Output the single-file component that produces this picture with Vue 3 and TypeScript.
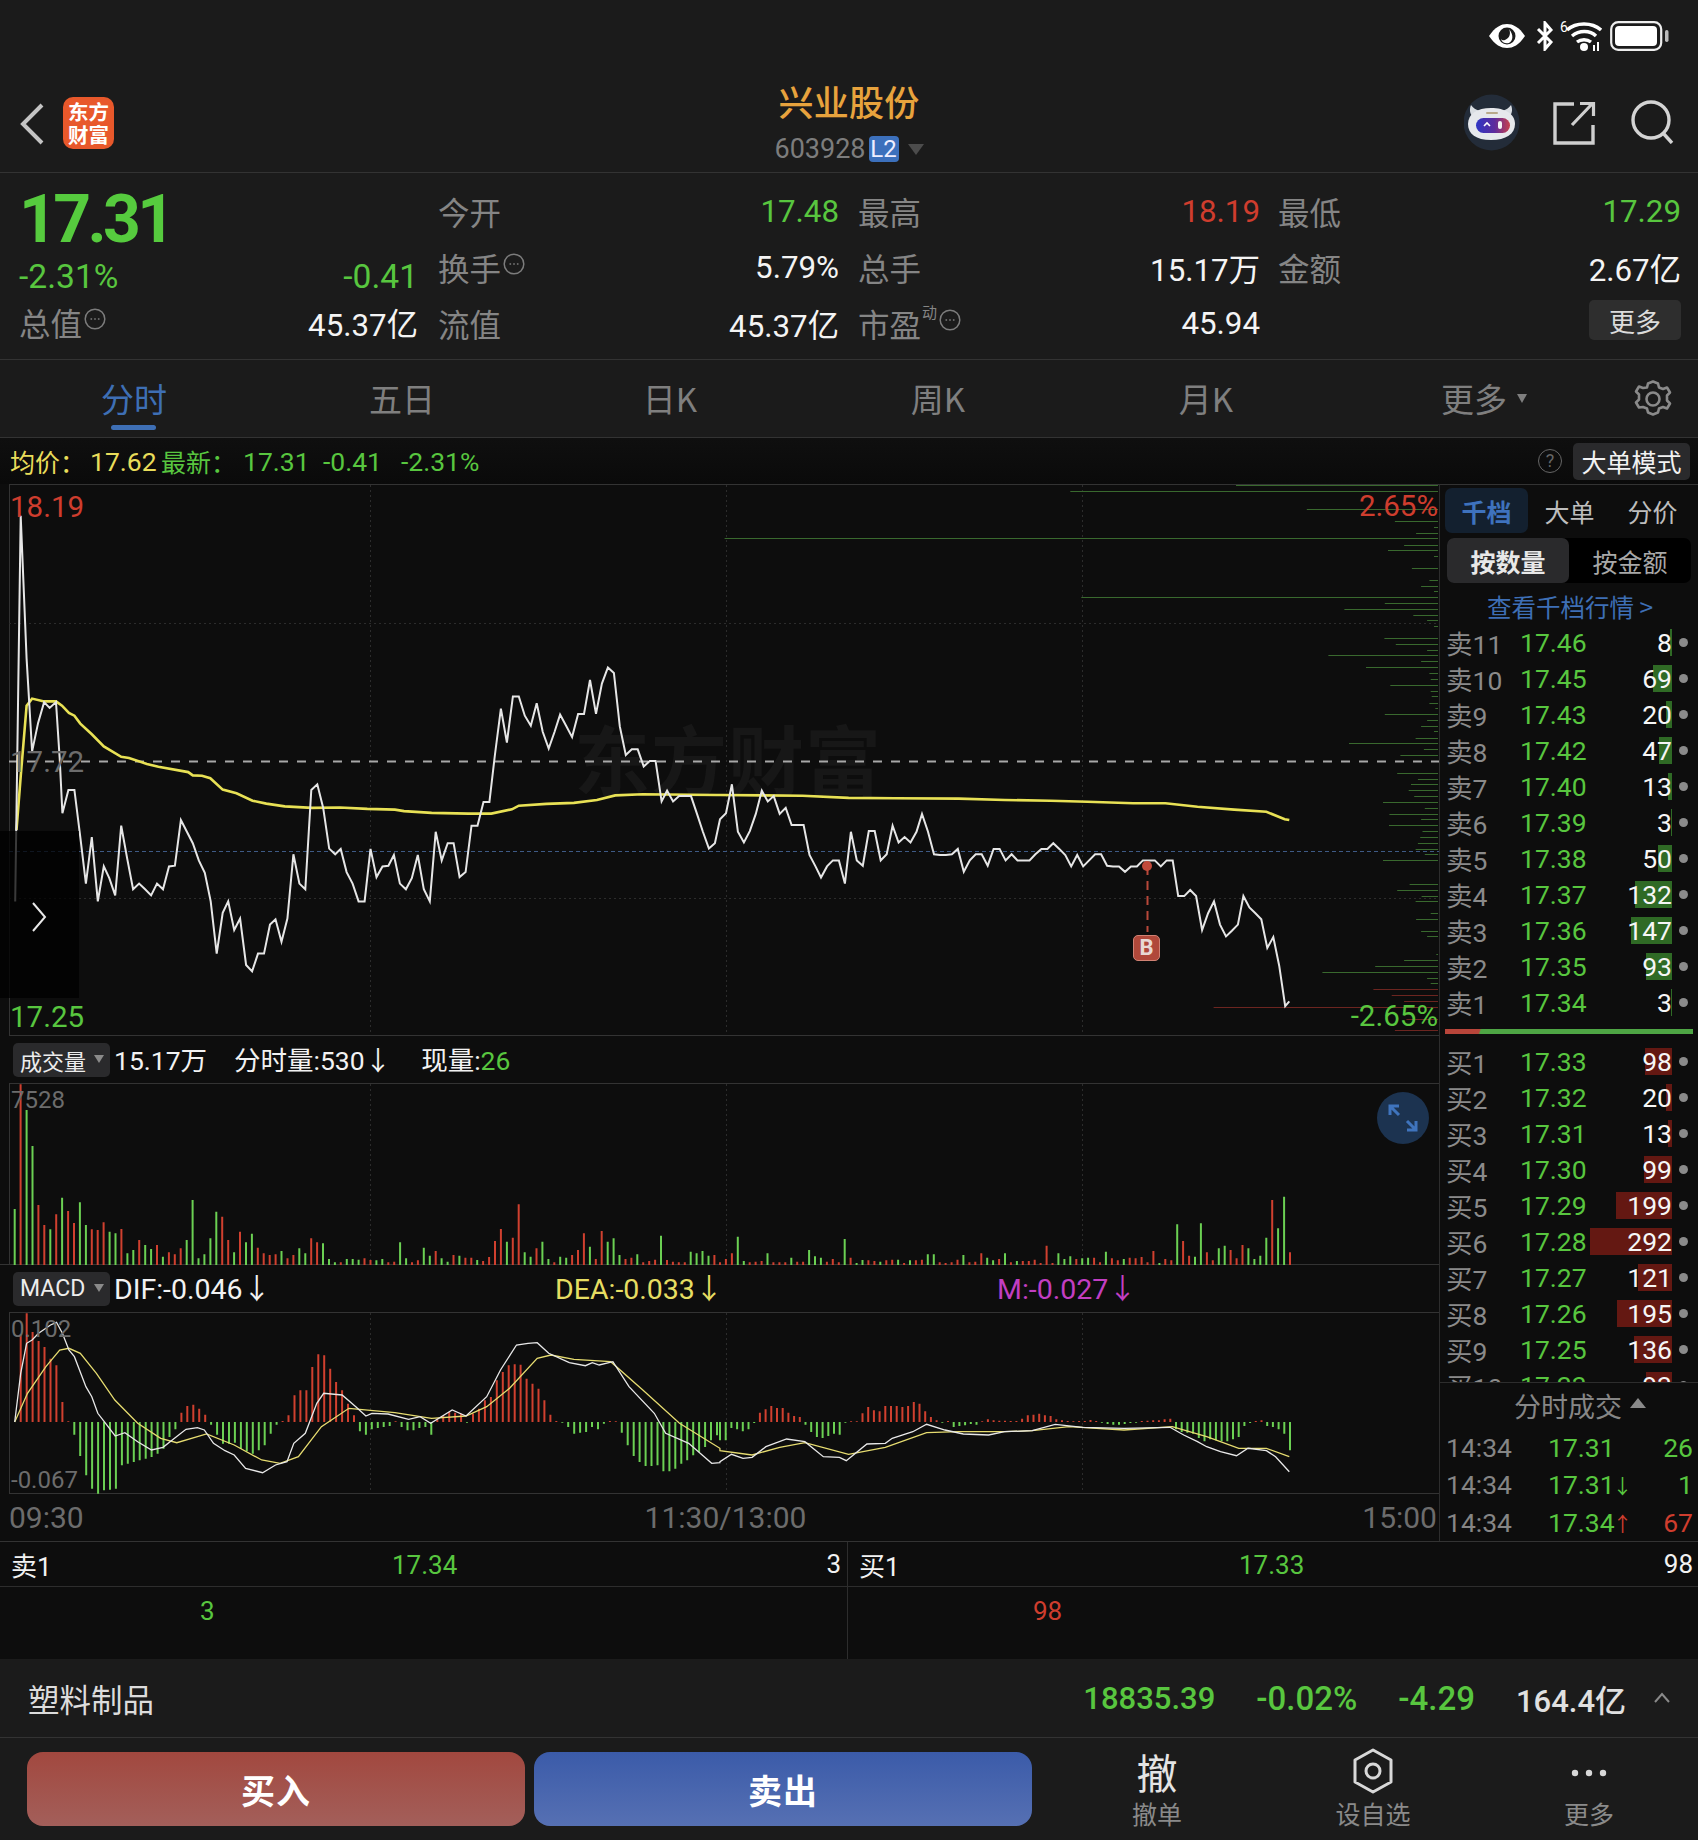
<script setup lang="ts">
const pts = (a: number[], ox: number, sx: number, oy: number, sy: number): string => {
  const out: string[] = []
  for (let i = 0; i + 1 < a.length; i += 2) out.push(`${(ox + a[i] * sx).toFixed(1)},${(oy + a[i + 1] * sy).toFixed(1)}`)
  return out.join(' ')
}
const K = 1 / 2.178
const price3 = [33,1180,45,100,58,500,70,760,83,680,96,622,108,638,122,622,130,780,136,933,149,868,162,868,175,1000,187,1130,200,1000,213,1180,226,1082,238,1115,251,1163,264,968,277,1060,290,1146,303,1130,316,1146,329,1163,342,1130,355,1146,368,1082,381,1080,394,952,407,985,420,1017,433,1065,446,1100,459,1180,472,1326,485,1212,497,1180,510,1260,523,1228,536,1358,549,1376,562,1326,575,1326,588,1245,600,1230,613,1293,626,1228,639,1048,652,1130,665,1146,678,868,691,852,704,918,717,1032,730,1048,742,1033,755,1098,768,1130,781,1180,794,1180,807,1033,820,1112,833,1082,846,1080,858,1050,871,1130,884,1146,897,1115,910,1050,923,1146,936,1180,949,985,962,1065,975,1017,988,1017,1001,1112,1014,1098,1027,968,1040,968,1053,902,1066,902,1078,770,1091,640,1104,735,1117,606,1130,606,1143,660,1156,688,1169,625,1182,705,1195,752,1208,705,1220,657,1233,688,1246,720,1259,655,1272,655,1285,560,1298,655,1311,570,1324,525,1337,540,1350,690,1363,770,1376,754,1389,754,1402,802,1415,787,1428,787,1441,900,1453,870,1466,900,1479,885,1492,885,1505,885,1518,935,1531,985,1544,1032,1557,1017]
const price4 = [0,950,13,933,26,852,39,985,52,1015,65,983,78,935,91,870,104,900,117,885,130,935,143,918,156,966,169,966,182,966,195,1050,208,1082,220,1113,233,1082,246,1065,259,1065,272,1130,285,985,298,1065,311,1080,324,983,337,983,350,1065,363,1048,376,968,389,1015,402,1000,415,1015,428,985,440,935,453,985,466,1048,479,1050,492,1050,505,1048,518,1033,531,1097,544,1065,557,1048,570,1048,583,1080,596,1033,609,1033,622,1065,635,1048,648,1065,661,1065,674,1065,687,1048,700,1033,713,1033,726,1017,739,1033,752,1050,765,1082,778,1050,791,1082,804,1065,817,1048,830,1048,843,1080,856,1082,869,1082,882,1097,895,1082,908,1082,921,1065,934,1065,947,1065,960,1082,973,1065,986,1065,998,1165,1011,1165,1024,1148,1037,1165,1050,1260,1063,1213,1076,1180,1089,1245,1102,1278,1115,1262,1128,1245,1140,1165,1153,1197,1166,1213,1179,1230,1192,1310,1205,1280,1218,1360,1231,1473,1240,1460]
const avg3 = [36,980,45,830,58,632,70,612,96,620,122,620,135,632,150,652,162,660,175,682,200,712,226,746,264,775,281,778,320,795,345,803,410,818,420,827,440,828,458,835,485,867,515,877,550,898,580,906,620,914,680,918,740,917,800,921,860,923,880,927,940,932,1020,934,1070,934,1115,922,1130,912,1190,907,1250,904,1300,896,1340,883,1400,880,1560,882]
const avg4 = [0,882,180,884,280,890,380,891,520,892,620,896,720,898,800,901,900,905,970,905,1040,915,1120,923,1190,929,1230,950,1240,952]
const pricePts = pts(price3, 0, K, 480, 1 / 2.8) + ' ' + pts(price4, 720, K, 480, 1 / 2.8)
const avgPts = pts(avg3, 0, K, 480, 1 / 2.8) + ' ' + pts(avg4, 720, K, 480, 1 / 2.8)

const depth = [[32,763],[82,1278],[115,1470],[131,1555],[148,1516],[163,10],[181,1490],[197,1455],[213,1555],[246,1507],[279,1545],[296,1527],[312,1555],[327,787],[344,1448],[360,1360],[377,1510],[393,1540],[410,1555],[442,1447],[459,1472],[475,1540],[491,1325],[508,1527],[524,1407],[541,1545],[557,1548],[574,1460],[590,1548],[606,1550],[623,1545],[639,1558],[655,1448],[672,1540],[688,1527],[704,1555],[721,1515],[737,1370],[754,1533],[770,1482],[820,1475],[836,1520],[852,1505],[869,1500],[885,1512],[901,1444],[917,1535],[934,1458],[950,1527],[967,1457],[983,1530],[999,1525],[1016,1520],[1032,1515],[1048,1535],[1065,1444],[1131,1502],[1147,1475],[1164,1528],[1180,1515],[1213,1548],[1229,1516],[1262,1527],[1278,1540],[1328,1560],[1344,1490],[1360,1427],[1377,1312],[1393,1540],[1409,1548]]
const depthR = [[1426,1423],[1442,1463],[1458,1490],[1475,1075],[1508,1495],[1541,1470]]
const depthPath = (l: number[][]): string => l.map(([y, x]) => `M${(720 + x * K).toFixed(1)} ${Math.round(480 + y / 2.8) + 0.5}H1438`).join('')
const depthG = 'M1236 485.5H1438' + depthPath(depth)
const depthRed = depthPath(depthR)

const vol7 = 'g168 r542 g465 g357 r180 r120 g107 r152 g202 r162 r126 g188 g120 r107 r105 r128 g100 g95 r108 g35 g45 r75 g60 g48 r60 g25 r38 r32 r50 g75 g195 g20 g32 g80 g160 r145 r75 g38 r100 g68 g94 r52 r35 r30 r32 g42 r20 r30 g50 g35 r80 r68 g65 g18 g8 r8 g18 g18 g16 r20 r15 g14 g18 r8 r10 g68 g20 r8 r14 g52 g28 r42 g20 g10 r30 g28 r22 r22 g15 r12 r24 r72 r108 g70 r82 r182 g38 g25 r50 g70 g18 r8 g25 g22 r30 r45 r95 g55 r18 r102 g70 g80 g30 r18 r22 g32 r8 r12 r16 g88 r15 r10 r8 r8 g40 g35 g42 g28 r30'.split(' ')
const vol8 = 'r8 r18 r35 g85 g12 r8 r10 r12 g35 r8 r8 r8 g22 r10 r10 g45 g26 g22 r10 r18 r8 g78 r22 g6 g15 r14 r12 g10 r14 r16 g16 r6 g14 r14 r16 g32 g32 r8 r6 r8 r16 g30 r8 r10 r35 g22 g14 r18 g35 r8 g12 r12 r12 r16 r6 r58 r6 g35 g18 g26 r18 g20 g22 r22 r8 g40 r20 r14 g18 r22 r20 r24 r8 r42 g6 r18 r14 g122 r72 r28 g25 g125 r38 r14 g50 g58 r45 r20 r60 g50 g18 g28 g82 r195 g110 g205 r38'.split(' ')
const barPaths = (list: string[], x0: number, x1: number, c: string, base: number, dir: number): string => {
  const step = (x1 - x0) / (list.length - 1)
  return list.map((t, i) => (t[0] === c ? `M${(x0 + i * step).toFixed(1)} ${base}V${(base - dir * Number(t.slice(1)) / 3).toFixed(1)}` : '')).join('')
}
const volG = barPaths(vol7, 14.7, 714.4, 'g', 1265, 1) + barPaths(vol8, 720, 1290, 'g', 1265, 1)
const volR = barPaths(vol7, 14.7, 714.4, 'r', 1265, 1) + barPaths(vol8, 720, 1290, 'r', 1265, 1)

const m7 = 'r262 r326 r270 r243 r225 r190 r170 r60 r2 g38 g102 g160 g200 g215 g205 g203 g200 g130 g125 g120 g115 g110 g105 g95 g80 g45 g22 r28 r48 r52 r40 r22 g8 g38 g65 g65 g62 g80 g88 g95 g85 g70 g35 g8 r3 r20 r80 r95 r95 r165 r203 r200 r160 r120 r95 r55 r20 g28 g38 g22 g18 g15 g12 r2 g15 g25 g25 g18 g15 g38 r10 r18 r30 r28 r25 g2 r25 r40 r65 r75 r125 r150 r170 r173 r172 r130 r115 r100 r65 r22 r3 g2 g15 g35 g32 g30 g15 g22 g5 r3 r2 g32 g70 g102 g120 g132 g132 g130 g148 g148 g140 g125 g115 g100 g90 g75 g55 g40'.split(' ')
const m8 = 'g55 g55 g18 g22 g28 g22 g3 r28 r38 r48 r42 r42 r28 r18 r15 g8 g30 g45 g48 g42 g35 g38 g2 r2 r2 r26 r45 r35 r32 r48 r48 r48 r45 r48 r60 r55 r32 r15 r5 g2 r3 g15 g12 g10 g6 g8 r2 r8 r5 r4 r4 r3 r3 r10 r20 r22 r25 r20 r18 r8 r5 r3 r2 r3 r3 r6 r3 g2 g6 g8 g8 g6 g3 g2 r3 r4 r5 r5 r8 r10 g22 g30 g32 g35 g48 g58 g52 g55 g58 g58 g52 g45 g12 g3 r3 r5 g12 g15 g22 g35 g85'.split(' ')
const macdG = barPaths(m7, 20.7, 717, 'g', 1422, -1) + barPaths(m8, 720, 1290, 'g', 1422, -1)
const macdR = barPaths(m7, 20.7, 717, 'r', 1422, 1) + barPaths(m8, 720, 1290, 'r', 1422, 1)
const dif7 = [32,1146,45,1000,58,910,70,900,84,880,110,855,123,847,136,880,150,930,162,950,187,1040,200,1070,213,1120,230,1150,251,1188,272,1178,300,1205,330,1230,355,1222,380,1195,405,1168,430,1163,445,1170,465,1210,490,1232,510,1245,535,1285,572,1298,600,1275,625,1265,640,1210,665,1180,690,1090,705,1060,745,1065,775,1100,797,1128,810,1120,845,1122,890,1138,915,1130,938,1150,985,1110,1015,1128,1060,1070,1090,990,1125,915,1150,910,1170,908,1195,940,1240,968,1275,977,1290,968,1305,975,1335,965,1370,1040,1425,1120,1450,1180,1500,1210,1550,1270,1568,1268]
const dif8 = [0,1265,25,1243,50,1255,70,1252,100,1220,145,1197,185,1205,225,1250,260,1252,275,1262,320,1212,360,1210,375,1195,420,1175,450,1153,490,1170,530,1182,585,1185,620,1175,680,1172,730,1153,790,1162,880,1165,980,1162,1010,1185,1040,1205,1060,1220,1090,1235,1125,1247,1150,1225,1190,1232,1210,1250,1240,1295]
const dea7 = [32,1146,60,1060,100,980,130,930,150,925,175,940,210,1000,250,1080,300,1150,350,1195,385,1208,450,1182,510,1215,570,1260,610,1270,650,1250,700,1160,760,1105,860,1118,940,1135,1015,1128,1060,1100,1110,1045,1170,955,1200,945,1250,958,1330,965,1400,1050,1480,1150,1568,1225]
const dea8 = [0,1232,70,1245,130,1222,185,1208,280,1243,360,1222,450,1178,520,1175,620,1175,680,1172,760,1160,880,1170,985,1160,1060,1190,1130,1225,1190,1225,1240,1250]
const difPts = pts(dif7, 0, K, 1040, 1 / 3) + ' ' + pts(dif8, 720, K, 1040, 1 / 3)
const deaPts = pts(dea7, 0, K, 1040, 1 / 3) + ' ' + pts(dea8, 720, K, 1040, 1 / 3)

const sells = [
  { n: '卖11', p: '17.46', q: 8 }, { n: '卖10', p: '17.45', q: 69 }, { n: '卖9', p: '17.43', q: 20 },
  { n: '卖8', p: '17.42', q: 47 }, { n: '卖7', p: '17.40', q: 13 }, { n: '卖6', p: '17.39', q: 3 },
  { n: '卖5', p: '17.38', q: 50 }, { n: '卖4', p: '17.37', q: 132 }, { n: '卖3', p: '17.36', q: 147 },
  { n: '卖2', p: '17.35', q: 93 }, { n: '卖1', p: '17.34', q: 3 },
]
const buys = [
  { n: '买1', p: '17.33', q: 98 }, { n: '买2', p: '17.32', q: 20 }, { n: '买3', p: '17.31', q: 13 },
  { n: '买4', p: '17.30', q: 99 }, { n: '买5', p: '17.29', q: 199 }, { n: '买6', p: '17.28', q: 292 },
  { n: '买7', p: '17.27', q: 121 }, { n: '买8', p: '17.26', q: 195 }, { n: '买9', p: '17.25', q: 136 },
  { n: '买10', p: '17.23', q: 93 },
]
const qtyW = (q: number): string => `${Math.max(1.5, q * 0.28).toFixed(1)}px`
const ticks = [
  { p: '17.31', a: '', ac: '', q: '26', c: 'g' },
  { p: '17.31', a: '↓', ac: 'g', q: '1', c: 'g' },
  { p: '17.34', a: '↑', ac: 'r', q: '67', c: 'r' },
]
const tabs = ['分时', '五日', '日K', '周K', '月K']
</script>

<template>
  <div class="page">
    <div class="status">
      <svg class="s-eye" width="38" height="26" viewBox="0 0 38 26"><path d="M1 13C7 4 13 1 19 1s12 3 18 12c-6 9-12 12-18 12S7 22 1 13z" fill="#fff"/><circle cx="19" cy="13" r="8.5" fill="#1b1b1b"/><path d="M21 6c2 4 1 9-4 11-2 .6-3 0-4-1 1 4 5 5 8 4 4-2 5-8 0-14z" fill="#fff"/></svg>
      <svg class="s-bt" width="20" height="30" viewBox="0 0 20 30"><path d="M3 8l13 13-6 7V2l6 7L3 22" fill="none" stroke="#fff" stroke-width="3"/></svg>
      <svg class="s-wifi" width="42" height="32" viewBox="0 0 42 32"><path d="M7 10c9-8 25-8 34 0M12 16c7-6 18-6 24 0M17 22c4-3 10-3 14 0" fill="none" stroke="#fff" stroke-width="3.4"/><circle cx="24" cy="27" r="4" fill="#fff"/><path d="M34 25v6M38 22v9" stroke="#fff" stroke-width="2"/><text x="0" y="12" fill="#fff" font-size="14" font-family="Roboto">6</text></svg>
      <svg class="s-bat" width="60" height="30" viewBox="0 0 60 30"><rect x="1.2" y="1.2" width="50" height="27.6" rx="7" fill="none" stroke="#eee" stroke-width="2.2"/><rect x="5" y="5" width="42" height="20" rx="4" fill="#fff"/><rect x="55" y="9" width="3.5" height="12" rx="1.7" fill="#bbb"/></svg>
    </div>

    <header class="head">
      <div class="head-left">
        <svg width="24" height="42" viewBox="0 0 24 42"><path d="M22 2L3 21l19 19" fill="none" stroke="#c4c4c4" stroke-width="4"/></svg>
        <div class="logo"><span>东方</span><span>财富</span></div>
      </div>
      <div class="head-mid">
        <div class="title">兴业股份</div>
        <div class="code"><span>603928</span><b class="l2">L2</b><i class="tri-code"></i></div>
      </div>
      <div class="head-right">
        <svg class="robot" width="58" height="58" viewBox="0 0 58 58">
          <defs><linearGradient id="vis" x1="0" x2="1"><stop offset="0" stop-color="#2f36c4"/><stop offset=".55" stop-color="#5d2b9c"/><stop offset="1" stop-color="#c8404c"/></linearGradient></defs>
          <circle cx="27.5" cy="28.5" r="28" fill="#232c39"/>
          <path d="M7 11c-2 5-1 9 2 12l7-6c-4-1-7-3-9-6zM47 11c2 5 1 9-2 12l-7-6c4-1 7-3 9-6z" fill="#d9dde2"/>
          <path d="M4 30c0-10 9-16 23-16s24 6 24 16c0 10-9 16-24 16S4 40 4 30z" fill="#e6e8ec"/>
          <rect x="12" y="24" width="34" height="15" rx="7.5" fill="url(#vis)"/>
          <path d="M20 32l3-3 3 3" fill="none" stroke="#fff" stroke-width="1.6"/><rect x="34" y="27" width="4" height="8" rx="2" fill="#f4f4f4"/>
          <rect x="22" y="18" width="12" height="2" rx="1" fill="#b8a98a"/>
        </svg>
        <svg width="44" height="44" viewBox="0 0 44 44"><path d="M22 3H3v39h38V24" fill="none" stroke="#cfcfcf" stroke-width="3.4"/><path d="M20 24L40 3M28 2.5h13.5V15" fill="none" stroke="#cfcfcf" stroke-width="3.2"/></svg>
        <svg width="44" height="44" viewBox="0 0 44 44"><circle cx="20" cy="20" r="18" fill="none" stroke="#d4d4d4" stroke-width="3.4"/><path d="M32 33l9 10" stroke="#d4d4d4" stroke-width="3.4"/></svg>
      </div>
    </header>

    <section class="quote">
      <div class="qcol first">
        <div class="bigprice">17.31</div>
        <div class="qrow chg g"><span>-2.31%</span><span>-0.41</span></div>
        <div class="qrow tot"><span class="lab">总值<svg class="info" width="22" height="22" viewBox="0 0 22 22"><circle cx="11" cy="11" r="9.8" fill="none" stroke="#7c7c7c" stroke-width="1.5"/><path d="M6.5 11h1.6M10.2 11h1.6M13.9 11h1.6" stroke="#7c7c7c" stroke-width="1.6"/></svg></span><span class="w">45.37亿</span></div>
      </div>
      <div class="qcol">
        <div class="qrow"><span class="lab">今开</span><span class="g">17.48</span></div>
        <div class="qrow"><span class="lab">换手<svg class="info" width="22" height="22" viewBox="0 0 22 22"><circle cx="11" cy="11" r="9.8" fill="none" stroke="#7c7c7c" stroke-width="1.5"/><path d="M6.5 11h1.6M10.2 11h1.6M13.9 11h1.6" stroke="#7c7c7c" stroke-width="1.6"/></svg></span><span class="w">5.79%</span></div>
        <div class="qrow"><span class="lab">流值</span><span class="w">45.37亿</span></div>
      </div>
      <div class="qcol">
        <div class="qrow"><span class="lab">最高</span><span class="r">18.19</span></div>
        <div class="qrow"><span class="lab">总手</span><span class="w">15.17万</span></div>
        <div class="qrow"><span class="lab">市盈<sup class="dong">动</sup><svg class="info" width="22" height="22" viewBox="0 0 22 22"><circle cx="11" cy="11" r="9.8" fill="none" stroke="#7c7c7c" stroke-width="1.5"/><path d="M6.5 11h1.6M10.2 11h1.6M13.9 11h1.6" stroke="#7c7c7c" stroke-width="1.6"/></svg></span><span class="w">45.94</span></div>
      </div>
      <div class="qcol">
        <div class="qrow"><span class="lab">最低</span><span class="g">17.29</span></div>
        <div class="qrow"><span class="lab">金额</span><span class="w">2.67亿</span></div>
        <div class="qrow end"><span class="more">更多</span></div>
      </div>
    </section>

    <nav class="tabs">
      <div v-for="(t, i) in tabs" :key="t" class="tab" :class="{ on: i === 0 }">{{ t }}</div>
      <div class="tab">更多<i class="tri-more"></i></div>
      <div class="gear">
        <svg width="38" height="40" viewBox="0 0 38 40"><path d="M19 2l5 2 1 4 4 1.5 4-1.5 3 5-3 3v5l3 3-3 5-4-1.5-4 1.5-1 4-5 2-5-2-1-4-4-1.5L5 28l-3-5 3-3v-5l-3-3 3-5 4 1.5L13 8l1-4z" transform="translate(0 .5)" fill="none" stroke="#8a8a8a" stroke-width="2.6" stroke-linejoin="round"/><circle cx="19" cy="20" r="6.5" fill="none" stroke="#8a8a8a" stroke-width="2.6"/></svg>
      </div>
    </nav>

    <section class="market">
      <div class="infobar">
        <div class="infol">
          <span class="y i1">均价：</span><span class="y i2">17.62</span>
          <span class="g i3">最新：</span><span class="g i4">17.31</span><span class="g i5">-0.41</span><span class="g">-2.31%</span>
        </div>
        <div class="infor">
          <span class="qm">?</span>
          <span class="bigmode">大单模式</span>
        </div>
      </div>

      <div class="split">
        <div class="charts">
          <div class="panel main">
            <svg class="chart" width="1440" height="552" viewBox="0 484 1440 552">
              <path d="M9 484.5H1439M9 1035.5H1439M9.5 484V1036" stroke="#333" fill="none"/>
              <path d="M370.5 485V1035M726.5 485V1035M1082.5 485V1035" stroke="#2c2c2c" stroke-dasharray="2 3" fill="none"/>
              <path d="M9 623.5H1439M9 898.5H1439" stroke="#2c2c2c" stroke-dasharray="2 3" fill="none"/>
              <path :d="depthG" stroke="#39692e" fill="none"/>
              <path :d="depthRed" stroke="#6c2520" fill="none"/>
              <path d="M9 761.5H1439" stroke="#a8a8a8" stroke-width="2" stroke-dasharray="9 9" fill="none"/>
              <path d="M9 851.5H1439" stroke="#3e5a85" stroke-dasharray="4 3" fill="none"/>
              <polyline :points="avgPts" fill="none" stroke="#e8e155" stroke-width="2.6"/>
              <polyline :points="pricePts" fill="none" stroke="#e6e6e6" stroke-width="2"/>
              <path d="M1147.5 866V932" stroke="#b8483a" stroke-width="2" stroke-dasharray="9 6"/>
              <circle cx="1147" cy="866" r="5" fill="#c14a3b"/>
            </svg>
            <div class="watermark">东方财富</div>
            <span class="clab r l1">18.19</span>
            <span class="clab mid l2n">17.72</span>
            <span class="clab g l3">17.25</span>
            <span class="clab r rr1">2.65%</span>
            <span class="clab g rr2">-2.65%</span>
            <div class="sidearrow"><svg width="16" height="30" viewBox="0 0 16 30"><path d="M2 1l12 14L2 29" fill="none" stroke="#e8e8e8" stroke-width="2"/></svg></div>
            <div class="bmark">B</div>
          </div>

          <div class="ihead">
            <span class="sel">成交量<i class="tri-sel"></i></span>
            <span class="hv">15.17万</span>
            <span class="hv gap1">分时量:530<em>↓</em></span>
            <span class="hv gap2">现量:<span class="g">26</span></span>
          </div>
          <div class="panel sub">
            <svg class="chart" width="1440" height="182" viewBox="0 1083 1440 182">
              <path d="M9 1083.5H1439M9.5 1083V1265M0 1264.5H1439" stroke="#333" fill="none"/>
              <path d="M370.5 1084V1265M726.5 1084V1265M1082.5 1084V1265" stroke="#2c2c2c" stroke-dasharray="2 3" fill="none"/>
              <path :d="volG" stroke="#6bd053" stroke-width="2" fill="none"/>
              <path :d="volR" stroke="#d0402f" stroke-width="2" fill="none"/>
            </svg>
            <span class="slab vl">7528</span>
            <div class="expand"><svg width="32" height="30" viewBox="0 0 32 30"><path d="M3 12V3h9M3 3l9 9M29 18v9h-9M29 27l-9-9" fill="none" stroke="#3f74bd" stroke-width="3"/></svg></div>
          </div>

          <div class="ihead macdh">
            <span class="sel">MACD<i class="tri-sel"></i></span>
            <span class="hv">DIF:-0.046<em>↓</em></span>
            <span class="hv dea">DEA:-0.033<em>↓</em></span>
            <span class="hv mm">M:-0.027<em>↓</em></span>
          </div>
          <div class="panel sub">
            <svg class="chart" width="1440" height="182" viewBox="0 1312 1440 182">
              <path d="M9 1312.5H1439M9.5 1312V1494M9 1493.5H1439" stroke="#333" fill="none"/>
              <path d="M370.5 1313V1493M726.5 1313V1493M1082.5 1313V1493" stroke="#2c2c2c" stroke-dasharray="2 3" fill="none"/>
              <path :d="macdG" stroke="#6bd053" stroke-width="2" fill="none"/>
              <path :d="macdR" stroke="#d0402f" stroke-width="2" fill="none"/>
              <polyline :points="deaPts" fill="none" stroke="#e6dc70" stroke-width="1.3"/>
              <polyline :points="difPts" fill="none" stroke="#e8e8e8" stroke-width="1.3"/>
            </svg>
            <span class="slab m1">0.102</span>
            <span class="slab m2">-0.067</span>
          </div>

          <div class="axis"><span>09:30</span><span class="ax-mid">11:30/13:00</span><span>15:00</span></div>
        </div>

        <aside class="book">
          <div class="booktop">
            <div class="btabs">
              <span class="btab on">千档</span><span class="btab">大单</span><span class="btab">分价</span>
            </div>
            <div class="toggle"><span class="tg on">按数量</span><span class="tg">按金额</span></div>
            <div class="link">查看千档行情 &gt;</div>
            <div v-for="r in sells" :key="r.n" class="brow">
              <span class="bn">{{ r.n }}</span><span class="bp">{{ r.p }}</span>
              <span class="bq"><i class="qbar gbar" :style="{ width: qtyW(r.q) }"></i><b>{{ r.q }}</b></span><i class="dot"></i>
            </div>
            <div class="ratio"></div>
            <div v-for="r in buys" :key="r.n" class="brow">
              <span class="bn">{{ r.n }}</span><span class="bp">{{ r.p }}</span>
              <span class="bq"><i class="qbar rbar" :style="{ width: qtyW(r.q) }"></i><b>{{ r.q }}</b></span><i class="dot"></i>
            </div>
          </div>
          <div class="trades">
            <div class="thead">分时成交<i class="tri-up"></i></div>
            <div v-for="(t, i) in ticks" :key="i" class="trow">
              <span class="tt">14:34</span>
              <span class="tp g">{{ t.p }}<em :class="t.ac">{{ t.a }}</em></span>
              <span class="tq" :class="t.c">{{ t.q }}</span>
            </div>
          </div>
        </aside>
      </div>

      <div class="orders">
        <div class="ocol">
          <div class="orow1"><span>卖1</span><span class="g opx">17.34</span><span>3</span></div>
          <div class="orow2"><span class="g ov1">3</span></div>
        </div>
        <div class="ocol right">
          <div class="orow1"><span>买1</span><span class="g opx2">17.33</span><span>98</span></div>
          <div class="orow2"><span class="r ov2">98</span></div>
        </div>
      </div>
    </section>

    <section class="industry">
      <span class="iname">塑料制品</span>
      <div class="ivals">
        <span class="g iv1">18835.39</span><span class="g iv2">-0.02%</span><span class="g iv3">-4.29</span><span class="iv4">164.4亿</span>
        <svg width="18" height="12" viewBox="0 0 18 12"><path d="M2 10l7-8 7 8" fill="none" stroke="#8a8a8a" stroke-width="2"/></svg>
      </div>
    </section>

    <footer class="actions">
      <button class="btn buy">买入</button>
      <button class="btn sell">卖出</button>
      <div class="act a1"><span class="bigche">撤</span><span class="alab">撤单</span></div>
      <div class="act a2">
        <svg width="42" height="46" viewBox="0 0 42 46"><path d="M21 2l18 10v22L21 44 3 34V12z" fill="none" stroke="#d8d8d8" stroke-width="3" stroke-linejoin="round"/><circle cx="21" cy="23" r="7" fill="none" stroke="#d8d8d8" stroke-width="3"/></svg>
        <span class="alab">设自选</span>
      </div>
      <div class="act a3">
        <svg width="38" height="46" viewBox="0 0 38 46"><circle cx="5" cy="25" r="3.2" fill="#d8d8d8"/><circle cx="19" cy="25" r="3.2" fill="#d8d8d8"/><circle cx="33" cy="25" r="3.2" fill="#d8d8d8"/></svg>
        <span class="alab">更多</span>
      </div>
    </footer>
  </div>
</template>

<style>
html, body { background: #1b1b1b; }
</style>

<style scoped>
.page { width: 1698px; height: 1840px; background: #1b1b1b; overflow: hidden; display: flex; flex-direction: column; color: #f2f2f2; font-family: Roboto, "Noto Sans CJK SC", sans-serif; }
.g { color: #58c63f; }
.r { color: #cf3d2e; }
.w { color: #f4f4f4; }
.y { color: #e9dd5a; }
em { font-style: normal; }

.status { height: 80px; display: flex; justify-content: flex-end; align-items: center; padding: 0 28px 8px 0; box-sizing: border-box; }
.s-eye { margin-right: 9px; }
.s-bt { margin-right: 5px; }
.s-wifi { margin-right: 8px; }

.head { height: 93px; box-sizing: border-box; border-bottom: 1px solid #333; position: relative; display: flex; justify-content: space-between; }
.head-left { display: flex; align-items: flex-start; padding: 23px 0 0 20px; gap: 19px; }
.logo { width: 51px; height: 52px; margin-top: -6px; background: #e8582b; border-radius: 10px; display: flex; flex-direction: column; align-items: center; justify-content: center; color: #fff; font: 700 20.5px/23px "Noto Sans CJK SC", sans-serif; }
.head-mid { position: absolute; left: 0; right: 0; top: 0; display: flex; flex-direction: column; align-items: center; pointer-events: none; }
.title { font: 500 35px/44px "Noto Sans CJK SC", sans-serif; color: #e8a33d; margin-top: -1px; letter-spacing: .3px; }
.code { display: flex; align-items: center; font-size: 27px; color: #7d7d7d; margin-top: 10px; height: 32px; }
.l2 { background: #3c70bc; color: #eef; border-radius: 4px; width: 30px; height: 26px; font: 400 24px/26px Roboto, sans-serif; text-align: center; margin-left: 3px; }
.tri-code { width: 0; height: 0; border-left: 8px solid transparent; border-right: 8px solid transparent; border-top: 11px solid #4c4c4c; margin-left: 9px; }
.head-right { display: flex; align-items: flex-start; gap: 30px; padding: 14px 23px 0 0; }
.head-right svg:nth-child(2) { margin-top: 7px; }
.head-right svg:nth-child(3) { margin-top: 6px; margin-left: 5px; }

.quote { height: 187px; box-sizing: border-box; border-bottom: 1px solid #333; display: grid; grid-template-columns: 398px 401px 401px 401px; column-gap: 20px; padding: 10px 0 0 20px; font-size: 31.3px; }
.qcol { display: flex; flex-direction: column; }
.qrow { height: 56px; display: flex; justify-content: space-between; align-items: center; }
.qrow.end { justify-content: flex-end; }
.lab { color: #858585; font-family: "Noto Sans CJK SC", sans-serif; font-size: 31.5px; display: inline-flex; align-items: center; position: relative; }
.qcol:nth-child(3) .lab { margin-left: -1px; }
.qcol:nth-child(4) .lab { margin-left: -2px; }
.info { margin-top: -6px; margin-left: 2px; }
.dong { font-size: 15px; line-height: 15px; position: relative; top: -12px; margin-left: 1px; vertical-align: baseline; }
.bigprice { color: #56cb3e; font: 700 66px/74px Roboto, sans-serif; letter-spacing: -3.6px; height: 74px; }
.first .chg { height: 38px; margin-top: 0; }
.first .tot { height: 52px; margin-top: 1px; }
.chg span { font-size: 33.6px; }
.first { margin-left: -1px; }
.more { background: #2e2e2e; color: #dcdcdc; width: 92px; height: 40px; border-radius: 5px; display: flex; align-items: center; justify-content: center; font: 400 26px "Noto Sans CJK SC", sans-serif; margin-top: -6px; }

.tabs { height: 78px; box-sizing: border-box; border-bottom: 1px solid #333; display: flex; }
.tab { width: 268px; height: 77px; display: flex; align-items: center; justify-content: center; font: 400 33px "Noto Sans CJK SC", sans-serif; color: #7f7f7f; position: relative; padding-bottom: 1px; box-sizing: border-box; margin-left: 0; }
.tab.on { color: #3e6fb5; }
.tab.on::after { content: ""; position: absolute; left: 111px; bottom: 7px; width: 45px; height: 5px; border-radius: 3px; background: #3e6fb5; }
.tri-more { width: 0; height: 0; border-left: 5.5px solid transparent; border-right: 5.5px solid transparent; border-top: 9px solid #7f7f7f; position: absolute; right: 81px; top: 34px; }
.gear { flex: 1; display: flex; align-items: center; padding-left: 26px; }

.market { background: #0d0d0d; display: flex; flex-direction: column; height: 1221px; }
.infobar { height: 46px; display: flex; justify-content: space-between; align-items: center; padding: 0 8px 0 10px; font-size: 26.5px; background: linear-gradient(#0f0f0f, #0a0a0a); white-space: nowrap; }
.infol { display: flex; align-items: center; }
.i1, .i3 { font-family: "Noto Sans CJK SC", sans-serif; font-size: 25px; }
.i1 { width: 80px; }
.i2 { width: 71px; }
.i3 { width: 82px; }
.i4 { width: 80px; }
.i5 { width: 78px; }
.infor { display: flex; align-items: center; gap: 11px; }
.qm { width: 24px; height: 24px; box-sizing: border-box; border: 1.5px solid #666; border-radius: 50%; color: #666; font-size: 18px; line-height: 21px; text-align: center; }
.bigmode { background: #2a2a2c; color: #f2f2f2; height: 37px; width: 117px; border-radius: 5px; display: flex; align-items: center; justify-content: center; font: 400 25px "Noto Sans CJK SC", sans-serif; }

.split { display: flex; height: 1057px; }
.charts { width: 1439px; flex: none; display: flex; flex-direction: column; }
.panel { position: relative; }
.panel.main { height: 552px; }
.panel.sub { height: 182px; }
.chart { display: block; position: absolute; left: 0; top: 0; z-index: 1; }
.watermark { position: absolute; left: 574px; top: 228px; font: 700 76px/90px "Noto Sans CJK SC", sans-serif; color: #171717; letter-spacing: 1px; }
.clab { position: absolute; font-size: 29.5px; line-height: 32px; z-index: 2; }
.l1 { left: 10px; top: 7px; }
.mid { color: #6c6c6c; }
.l2n { left: 10px; top: 262px; }
.l3 { left: 10px; top: 517px; }
.rr1 { right: 1px; top: 6px; }
.rr2 { right: 1px; top: 516px; }
.sidearrow { position: absolute; left: 0; top: 347px; width: 79px; height: 167px; background: rgba(0, 0, 0, .75); z-index: 2; display: flex; padding: 71px 0 0 31px; box-sizing: border-box; }
.bmark { position: absolute; left: 1133px; top: 451px; width: 27px; height: 26px; box-sizing: border-box; border: 1px solid #d08274; background: #b0483a; border-radius: 5px; color: #e8d8d4; font: 700 22px/24px Roboto, sans-serif; text-align: center; z-index: 2; }

.ihead { height: 47px; display: flex; align-items: center; font-size: 26.5px; padding-left: 13px; position: relative; white-space: nowrap; }
.macdh { font-size: 28.5px; }
.sel { width: 97px; height: 34px; background: #2a2a2c; border-radius: 5px; display: flex; align-items: center; padding-left: 7px; box-sizing: border-box; font-size: 22px; color: #ededed; position: relative; }
.macdh .sel { font-size: 23px; }
.tri-sel { position: absolute; right: 6px; top: 12px; width: 0; height: 0; border-left: 5px solid transparent; border-right: 5px solid transparent; border-top: 8px solid #8a8a8a; }
.hv { margin-left: 4px; margin-top: -2px; }
.macdh .hv { margin-top: -4px; }
.hv em { font-family: "Noto Sans CJK SC", sans-serif; }
.gap1 { margin-left: 27px; }
.gap2 { margin-left: 30px; }
.dea { position: absolute; left: 555px; margin-left: 0; color: #e6dd62; }
.mm { position: absolute; left: 997px; margin-left: 0; color: #c23ec2; }
.slab { position: absolute; font-size: 24px; line-height: 26px; color: #6c6c6c; z-index: 2; left: 11px; }
.vl { top: 4px; }
.m1 { top: 4px; }
.m2 { top: 155px; }
.expand { position: absolute; left: 1377px; top: 9px; width: 52px; height: 52px; border-radius: 50%; background: #1c3350; display: flex; align-items: center; justify-content: center; z-index: 2; }

.axis { height: 47px; display: flex; justify-content: space-between; align-items: center; padding: 0 2px 0 9px; color: #6c6c6c; font-size: 30px; }
.ax-mid { margin-left: 5px; }

.book { flex: 1; border-left: 1px solid #2d2d2d; display: flex; flex-direction: column; border-top: 1px solid #333; box-sizing: border-box; }
.booktop { height: 898px; overflow: hidden; border-bottom: 1px solid #2d2d2d; box-sizing: border-box; padding-top: 3px; }
.btabs { height: 45px; display: flex; padding-left: 5px; }
.btab { width: 83px; display: flex; align-items: center; justify-content: center; font: 400 25px "Noto Sans CJK SC", sans-serif; color: #bdbdbd; }
.btab.on { background: #13202f; color: #3e72bd; border-radius: 7px; font-weight: 700; }
.toggle { margin: 5px 7px 0 7px; height: 45px; display: flex; background: #000; border-radius: 7px; }
.tg { flex: 1; display: flex; align-items: center; justify-content: center; font: 400 25px "Noto Sans CJK SC", sans-serif; color: #a8a8a8; border-radius: 7px; }
.tg.on { background: #2a2a2c; color: #e8e8e8; font-weight: 700; }
.link { height: 41px; padding-top: 5px; box-sizing: border-box; display: flex; align-items: center; justify-content: center; font: 400 24.5px "Noto Sans CJK SC", sans-serif; color: #3e6fb5; margin-left: 2px; }
.brow { height: 36px; display: flex; align-items: center; font-size: 26.5px; position: relative; }
.bn { width: 80px; padding-left: 6px; box-sizing: border-box; color: #8a8a8a; font-size: 26.5px; flex: none; }
.bp { color: #58c63f; width: 70px; flex: none; }
.bq { width: 82px; flex: none; height: 27px; display: flex; justify-content: flex-end; align-items: center; position: relative; }
.bq b { font-weight: 400; position: relative; color: #f6f6f6; }
.qbar { position: absolute; right: 0; top: 0; bottom: 0; }
.gbar { background: #2f6a25; }
.rbar { background: #641812; }
.dot { width: 9px; height: 9px; border-radius: 50%; background: #8a8a8a; margin-left: 7px; }
.ratio { height: 5px; margin: 9px 5px 9px 5px; background: linear-gradient(110deg, #b8453a 14%, #4ea544 14.6%); }
.trades { flex: 1; }
.thead { height: 46px; display: flex; align-items: center; justify-content: center; color: #868686; font: 400 27px "Noto Sans CJK SC", sans-serif; margin-left: 22px; }
.tri-up { width: 0; height: 0; border-left: 8px solid transparent; border-right: 8px solid transparent; border-bottom: 10px solid #8a8a8a; margin: -6px 0 0 8px; }
.trow { height: 37.5px; display: flex; align-items: center; font-size: 26.5px; padding: 0 5px 0 6px; position: relative; }
.tt { color: #858585; width: 102px; }
.tp { flex: 1; }
.tp em { font-family: "Noto Sans CJK SC", sans-serif; font-size: 20px; margin-left: -2px; }
.tq { text-align: right; }

.orders { flex: 1; display: flex; border-top: 1px solid #333; box-sizing: border-box; font-size: 26px; }
.ocol { width: 848px; flex: none; box-sizing: border-box; border-right: 1px solid #2d2d2d; }
.ocol.right { flex: 1; border-right: 0; }
.orow1 { height: 45px; border-bottom: 1px solid #2d2d2d; box-sizing: border-box; display: flex; justify-content: space-between; align-items: center; padding: 0 6px 0 11px; position: relative; }
.ocol.right .orow1 { padding: 0 5px 0 11px; }
.opx { position: absolute; left: 392px; margin-top: 2px; }
.opx2 { position: absolute; left: 391px; margin-top: 2px; }
.orow2 { height: 72px; position: relative; }
.ov1 { position: absolute; left: 200px; top: 9px; }
.ov2 { position: absolute; left: 185px; top: 9px; }

.industry { height: 79px; box-sizing: border-box; border-bottom: 1px solid #333; display: flex; justify-content: space-between; align-items: center; padding: 0 27px 0 28px; }
.iname { font: 400 31.5px "Noto Sans CJK SC", sans-serif; color: #dcdcdc; }
.ivals { display: flex; align-items: center; font-size: 31px; font-weight: 500; }
.iv2, .iv3 { margin-left: 41px; font-size: 33px; }
.iv4 { margin-left: 41px; color: #e0e0e0; margin-right: 27px; }

.actions { flex: 1; display: flex; padding: 14px 0 0 27px; align-items: flex-start; position: relative; }
.btn { width: 498px; height: 74px; border: 0; border-radius: 16px; color: #fff; font: 700 34px "Noto Sans CJK SC", sans-serif; letter-spacing: 1px; }
.buy { background: linear-gradient(#a2483f, #a35f5a); }
.sell { background: linear-gradient(#3b5ba9, #5670b3); margin-left: 9px; }
.act { width: 216px; display: flex; flex-direction: column; align-items: center; margin-top: -4px; }
.act svg { height: 46px; }
.a1 { margin-left: 17px; }
.bigche { font: 400 41px/46px "Noto Sans CJK SC", sans-serif; color: #e4e4e4; }
.alab { color: #8a8a8a; font: 400 25px/34px "Noto Sans CJK SC", sans-serif; margin-top: 2px; }
</style>
